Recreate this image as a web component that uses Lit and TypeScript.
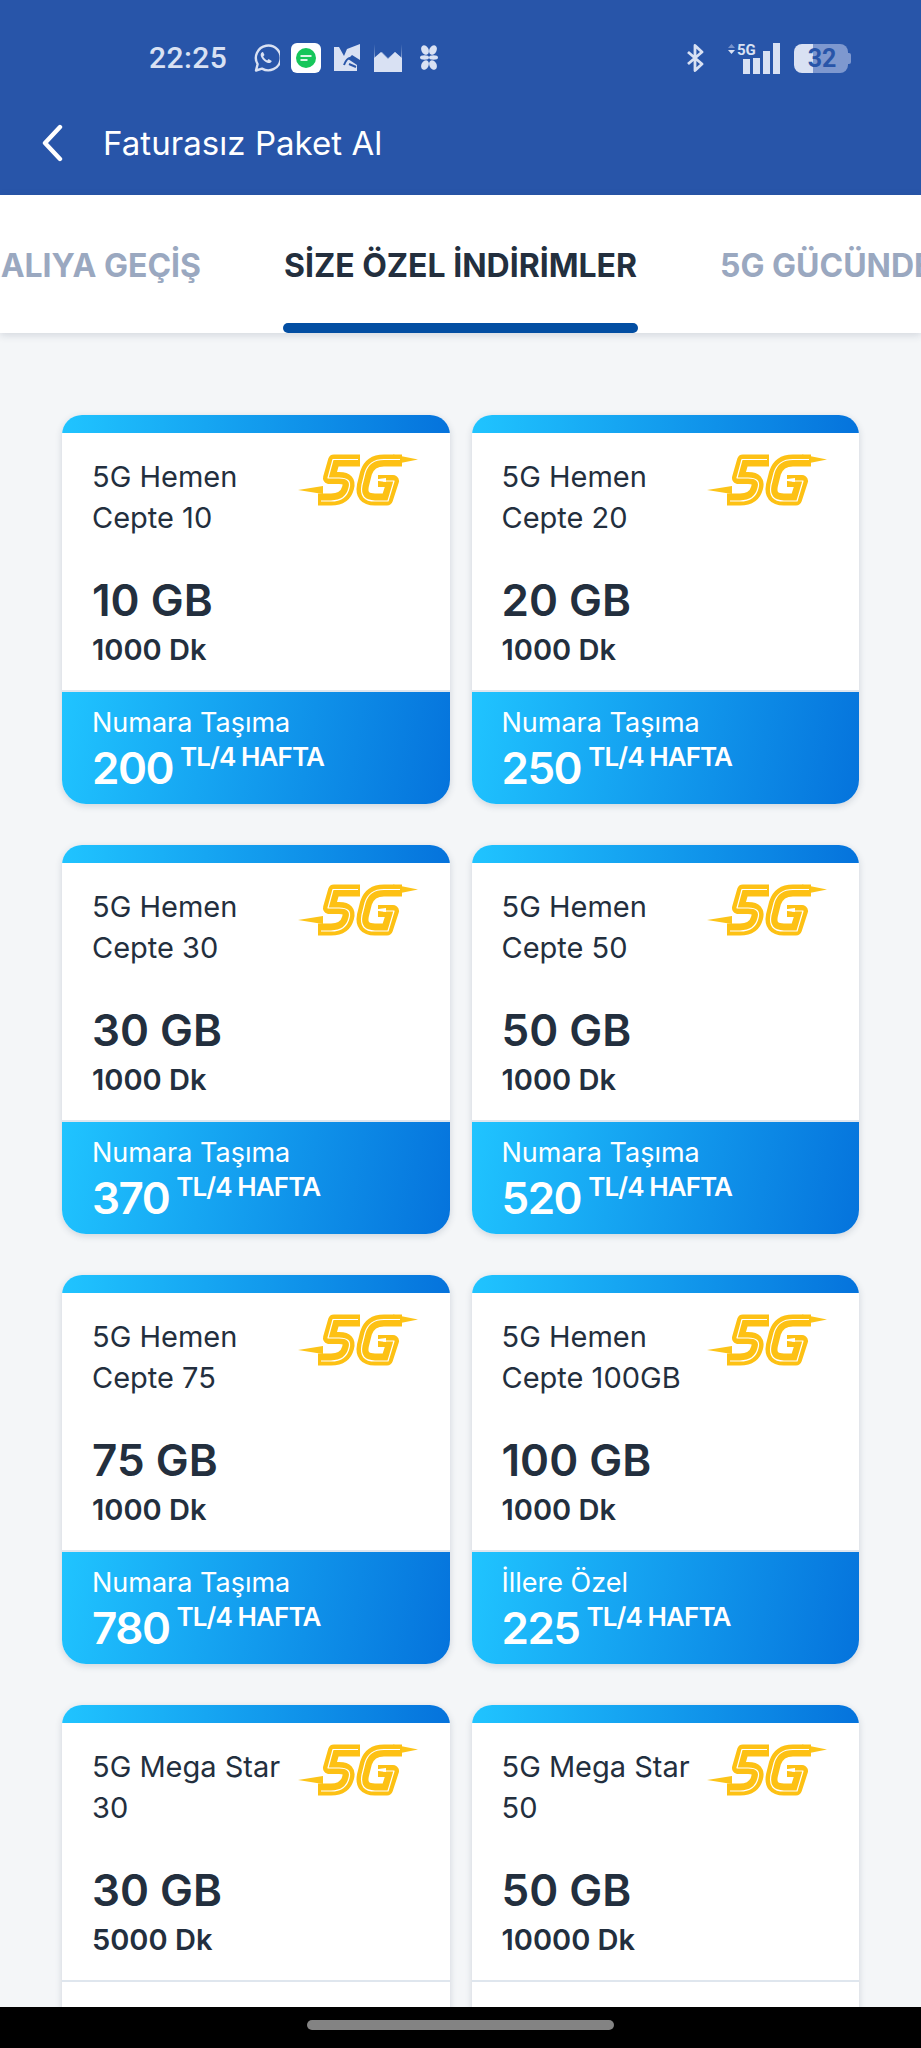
import { LitElement, html, css, svg } from "lit";
import { customElement } from "lit/decorators.js";

const logo = svg`
<svg class="logo" width="140" height="70" viewBox="0 0 140 70" fill="none">
  <polygon points="7,45 32,41 32,49" fill="#fcc419"/>
  <polygon points="127,14.5 102,9.5 102,19.5" fill="#fcc419"/>
  <g stroke="#fdc114" stroke-width="12" stroke-linejoin="round" stroke-linecap="butt">
    <path d="M69 15.5H43L38 33H48Q60 33 57 43Q54 54.5 40 54.5H27"/>
    <path d="M111 15.5H93Q79 15.5 75 28L72 40Q69 54.5 84 54.5H96L102 36H87"/>
  </g>
  <g stroke="#fff" stroke-width="1.2" stroke-linejoin="round">
    <path d="M67 14.5H42L37 33H48Q61 33 58 43Q55 56 40 56H30"/>
    <path d="M109 14.5H93Q78 14.5 74 28L71 40Q68 56 84 56H97L103 36H92"/>
  </g>
  <polygon points="80,35 95,33 95,37" fill="#fff"/>
</svg>`;

type Card = { t: [string, string]; gb: string; dk: string; label?: string; price?: string };

const cards: Card[] = [
  { t: ["5G Hemen", "Cepte 10"], gb: "10 GB", dk: "1000 Dk", label: "Numara Taşıma", price: "200" },
  { t: ["5G Hemen", "Cepte 20"], gb: "20 GB", dk: "1000 Dk", label: "Numara Taşıma", price: "250" },
  { t: ["5G Hemen", "Cepte 30"], gb: "30 GB", dk: "1000 Dk", label: "Numara Taşıma", price: "370" },
  { t: ["5G Hemen", "Cepte 50"], gb: "50 GB", dk: "1000 Dk", label: "Numara Taşıma", price: "520" },
  { t: ["5G Hemen", "Cepte 75"], gb: "75 GB", dk: "1000 Dk", label: "Numara Taşıma", price: "780" },
  { t: ["5G Hemen", "Cepte 100GB"], gb: "100 GB", dk: "1000 Dk", label: "İllere Özel", price: "225" },
  { t: ["5G Mega Star", "30"], gb: "30 GB", dk: "5000 Dk" },
  { t: ["5G Mega Star", "50"], gb: "50 GB", dk: "10000 Dk" },
];

@customElement("app-root")
export class AppRoot extends LitElement {
  static styles = css`
    :host {
      display: block;
      position: relative;
      width: 921px;
      height: 2048px;
      overflow: hidden;
      background: #f4f6f8;
      font-family: Inter, "Noto Sans", sans-serif;
      color: #232f3e;
    }
    .head {
      height: 195px;
      background: #2855a9;
      color: #fff;
      display: flex;
      flex-direction: column;
    }
    .status {
      display: flex;
      align-items: center;
      height: 30px;
      margin-top: 43px;
      padding-left: 149px;
      color: #d9e1f3;
    }
    .time {
      font: 500 30px/30px Roboto, sans-serif;
      letter-spacing: 0.4px;
      width: 103px;
    }
    .status svg { display: block; flex: none; }
    .i1 { margin-right: 11px; }
    .i2 { margin-right: 13px; }
    .i3 { margin-right: 14px; }
    .i4 { margin-right: 18px; }
    .i5 { margin-right: 248px; }
    .i6 { margin-right: 24px; }
    .i7 { margin-right: 14px; }
    .batt {
      position: relative;
      width: 54px;
      height: 29px;
      flex: none;
      border-radius: 8px;
      background: linear-gradient(90deg, #d9e1f3 0 36%, #7e98cf 36% 100%);
      color: #2855a9;
      font: 700 25px/29px Roboto, sans-serif;
      text-align: center;
      padding-left: 2px;
      box-sizing: border-box;
    }
    .batt::after {
      content: "";
      position: absolute;
      left: 54px;
      top: 9px;
      width: 3px;
      height: 11px;
      border-radius: 0 2px 2px 0;
      background: #7e98cf;
    }
    .back {
      display: flex;
      align-items: center;
      margin-top: 50px;
      padding-left: 41px;
      height: 40px;
    }
    .title {
      font-size: 33px;
      font-weight: 400;
      line-height: 40px;
      margin-left: 40px;
      letter-spacing: 0.05px;
    }
    .tabs {
      position: relative;
      display: flex;
      height: 138px;
      background: #fff;
      box-shadow: 0 2px 8px rgba(30, 50, 80, 0.16);
      overflow: hidden;
      font-size: 32px;
      font-weight: 700;
      color: #9aa8c0;
      white-space: nowrap;
    }
    .tab {
      flex: none;
      height: 138px;
      display: flex;
      flex-direction: column;
      line-height: 38px;
      padding-top: 52px;
      box-sizing: border-box;
    }
    .tab.first {
      width: 201px;
      overflow: hidden;
      align-items: flex-end;
      margin-right: 82px;
    }
    .tab.first span { flex: none; }
    .tab.active {
      width: 355px;
      color: #232f3e;
      margin-right: 82px;
      align-items: center;
      justify-content: space-between;
    }
    .bar {
      display: block;
      width: 355px;
      height: 10px;
      background: #034ea2;
      border-radius: 5px;
    }
    .grid {
      display: grid;
      grid-template-columns: 1fr 1fr;
      column-gap: 22px;
      row-gap: 41px;
      padding: 82px 62px 0 62px;
    }
    .card {
      background: #fff;
      border-radius: 20px 20px 24px 24px;
      height: 389px;
      box-shadow: 0 2px 7px rgba(40, 60, 90, 0.18);
      display: flex;
      flex-direction: column;
      overflow: hidden;
    }
    .top {
      height: 18px;
      flex: none;
      background: linear-gradient(90deg, #20c4ff, #0573dc);
    }
    .body {
      flex: none;
      height: 259px;
      box-sizing: border-box;
      border-bottom: 2px solid #dfe6ee;
      padding-left: 30px;
    }
    .row {
      display: flex;
      justify-content: space-between;
    }
    .name {
      font-size: 29px;
      line-height: 41px;
      padding-top: 23px;
      white-space: nowrap;
    }
    .logo {
      display: block;
      flex: none;
      margin: 12px 19px 0 0;
    }
    .gb {
      font-size: 44px;
      font-weight: 600;
      line-height: 50px;
      margin-top: 37px;
    }
    .dk {
      font-size: 29px;
      font-weight: 600;
      line-height: 36px;
      margin-top: 7px;
    }
    .foot {
      flex: 1;
      color: #fff;
      padding: 15px 0 0 30px;
      background: linear-gradient(100deg, #20c4ff, #0573dc);
    }
    .foot.plain { background: #fff; }
    .lab {
      font-size: 27px;
      line-height: 32px;
    }
    .pr {
      display: flex;
      gap: 7px;
      margin-top: 5px;
    }
    .num {
      font-size: 44px;
      font-weight: 600;
      line-height: 48px;
      letter-spacing: -1.5px;
    }
    .unit {
      font-size: 26px;
      font-weight: 600;
      line-height: 26px;
      letter-spacing: -0.9px;
    }
    .nav {
      position: absolute;
      left: 0;
      right: 0;
      bottom: 0;
      height: 41px;
      background: #000;
      display: flex;
      justify-content: center;
      padding-top: 13px;
      box-sizing: border-box;
    }
    .pill {
      width: 307px;
      height: 10px;
      border-radius: 5px;
      background: #838383;
    }
  `;

  render() {
    return html`
      <div class="head">
        <div class="status">
          <span class="time">22:25</span>
          <svg class="i1" width="28" height="30" viewBox="0 0 28 30" fill="none">
            <path d="M4 27.5l1.6-6.3A12.4 12.4 0 1 1 10 25.6z" stroke="#d9e1f3" stroke-width="2.4" stroke-linejoin="round"/>
            <path d="M10 9.2c-1.6 1-1.8 3-.5 5.4 1.5 2.7 4 4.8 6.5 5.3 1.9.4 3.4-.5 3.8-2l-3.2-1.8-1.4 1.4c-1.7-.7-3.2-2.3-4-4l1.3-1.5-1.5-3z" fill="#d9e1f3"/>
          </svg>
          <svg class="i2" width="30" height="30" viewBox="0 0 30 30">
            <rect width="30" height="30" rx="6" fill="#fff"/>
            <circle cx="15" cy="15" r="10" fill="#16c65a"/>
            <path d="M9.5 13h11M9.5 17h7" stroke="#fff" stroke-opacity=".85" stroke-width="1.8"/>
          </svg>
          <svg class="i3" width="26" height="28" viewBox="0 0 26 28">
            <path d="M0 3h5l5 9 3-7 13-5v16l-8-5-4 4 6 4 3 2v6H0z" fill="#d9e1f3"/>
            <path d="M10 21c2-5 4-7 6-7M15 20l7 3" stroke="#2855a9" stroke-width="2" fill="none"/>
          </svg>
          <svg class="i4" width="28" height="28" viewBox="0 0 28 28">
            <path d="M0 0l1 14 7-6 6 6 7-6 6 6 1-14v28H0z" fill="#d9e1f3" opacity=".55"/>
            <path d="M0 14l7-6 7 7 7-7 7 6v14H0z" fill="#d9e1f3"/>
          </svg>
          <svg class="i5" width="18" height="26" viewBox="0 0 18 26" fill="#d9e1f3">
            <ellipse cx="5" cy="5" rx="3.6" ry="5" transform="rotate(-25 5 5)"/>
            <ellipse cx="13" cy="5" rx="3.6" ry="5" transform="rotate(25 13 5)"/>
            <ellipse cx="4.5" cy="12.5" rx="4.5" ry="2.2"/>
            <ellipse cx="13.5" cy="12.5" rx="4.5" ry="2.2"/>
            <ellipse cx="5" cy="20" rx="3.6" ry="5" transform="rotate(25 5 20)"/>
            <ellipse cx="13" cy="20" rx="3.6" ry="5" transform="rotate(-25 13 20)"/>
          </svg>
          <svg class="i6" width="18" height="28" viewBox="0 0 18 28" fill="none">
            <path d="M2 8l14 12-7 6.5V1.5L16 8 2 20" stroke="#d9e1f3" stroke-width="2.8" stroke-linejoin="round"/>
          </svg>
          <svg class="i7" width="52" height="31" viewBox="0 0 52 31">
            <path d="M0 7h7l-3.5 4z" fill="#d9e1f3"/>
            <path d="M0 5h7L3.5 1z" fill="#d9e1f3" opacity=".45"/>
            <text x="9" y="12" font-family="Roboto, sans-serif" font-size="15" font-weight="700" fill="#d9e1f3">5G</text>
            <rect x="15" y="16" width="7" height="15" fill="#d9e1f3"/>
            <rect x="25" y="15" width="7" height="16" fill="#d9e1f3"/>
            <rect x="35" y="8" width="7" height="23" fill="#d9e1f3"/>
            <rect x="45" y="0" width="7" height="31" fill="#d9e1f3"/>
          </svg>
          <div class="batt">32</div>
        </div>
        <div class="back">
          <svg width="22" height="38" viewBox="0 0 22 38" fill="none">
            <path d="M19 3L4 19l15 16" stroke="#fff" stroke-width="4.4" stroke-linecap="round" stroke-linejoin="round"/>
          </svg>
          <span class="title">Faturasız Paket Al</span>
        </div>
      </div>
      <div class="tabs">
        <div class="tab first"><span>FATURALIYA GEÇİŞ</span></div>
        <div class="tab active"><span>SİZE ÖZEL İNDİRİMLER</span><i class="bar"></i></div>
        <div class="tab"><span>5G GÜCÜNDE</span></div>
      </div>
      <div class="grid">
        ${cards.map(
          (c) => html`
            <div class="card">
              <div class="top"></div>
              <div class="body">
                <div class="row">
                  <div class="name">${c.t[0]}<br />${c.t[1]}</div>
                  ${logo}
                </div>
                <div class="gb">${c.gb}</div>
                <div class="dk">${c.dk}</div>
              </div>
              ${c.label
                ? html`<div class="foot">
                    <div class="lab">${c.label}</div>
                    <div class="pr">
                      <span class="num">${c.price}</span>
                      <span class="unit">TL/4 HAFTA</span>
                    </div>
                  </div>`
                : html`<div class="foot plain"></div>`}
            </div>
          `
        )}
      </div>
      <div class="nav"><div class="pill"></div></div>
    `;
  }
}
